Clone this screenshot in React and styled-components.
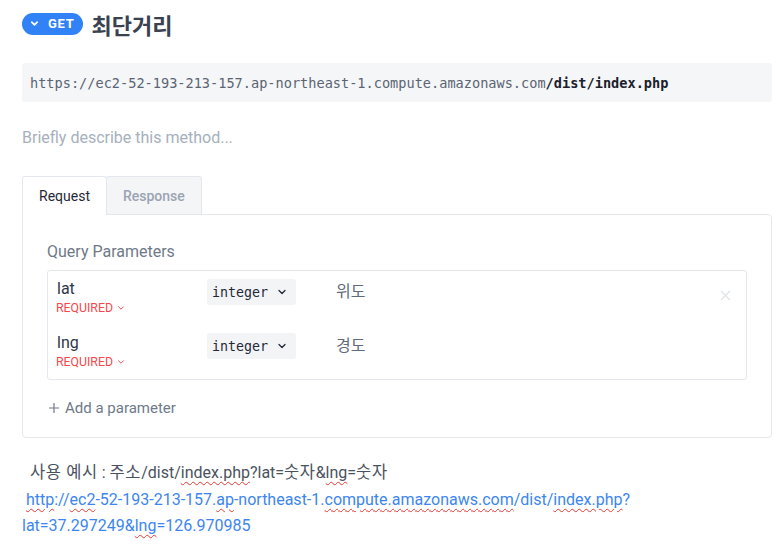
import React from "react";
import styled, { createGlobalStyle } from "styled-components";

const Global = createGlobalStyle`
  html, body { margin: 0; padding: 0; background: #fff; }
  body { font-family: Roboto, "Noto Sans CJK KR", sans-serif; color: #2d3748; }
`;

const Page = styled.div`
  padding: 10px 8px 0 22px;
  width: 750px;
`;

const Header = styled.div`
  display: flex;
  align-items: center;
  gap: 8px;
  height: 27px;
`;

const Badge = styled.div`
  display: flex;
  align-items: center;
  gap: 9px;
  height: 22px;
  padding: 0 9px 0 8px;
  border-radius: 11px;
  background: #3182f6;
  color: #fff;
  font-family: Roboto, sans-serif;
  font-weight: 700;
  font-size: 13px;
  letter-spacing: 0.7px;
`;

const Title = styled.h1`
  margin: 0;
  font-family: "Noto Sans CJK KR", sans-serif;
  font-size: 22px;
  font-weight: 700;
  color: #3a4250;
`;

const UrlBox = styled.div`
  margin-top: 26px;
  height: 39px;
  background: #f5f6f8;
  border-radius: 3px;
  display: flex;
  align-items: center;
  padding-left: 8px;
  font-family: "DejaVu Sans Mono", monospace;
  font-size: 13.6px;
  color: #5a6472;
  white-space: nowrap;
`;

const UrlPath = styled.span`
  color: #1a202c;
  font-weight: 700;
`;

const Describe = styled.div`
  margin-top: 26px;
  font-size: 16px;
  color: #a6b0bd;
  line-height: 20px;
`;

const Tabs = styled.div`
  margin-top: 28px;
  display: flex;
`;

const Tab = styled.div`
  box-sizing: border-box;
  padding: 0 16px;
  display: flex;
  align-items: center;
  font-size: 14px;
  border: 1px solid #e4e8ee;
  border-bottom: none;
  border-radius: 3px 3px 0 0;
  margin-left: ${(p) => (p.$first ? "0" : "-1px")};
  background: ${(p) => (p.$active ? "#fff" : "#f4f5f7")};
  color: ${(p) => (p.$active ? "#1f2937" : "#9aa4b2")};
  font-weight: ${(p) => (p.$active ? 400 : 500)};
  position: relative;
  z-index: ${(p) => (p.$active ? 1 : 0)};
  margin-bottom: ${(p) => (p.$active ? "-1px" : "0")};
  height: ${(p) => (p.$active ? "39px" : "38px")};
`;

const Panel = styled.div`
  border: 1px solid #e4e8ee;
  border-radius: 0 4px 4px 4px;
  padding: 27px 24px 20px 24px;
`;

const SectionTitle = styled.div`
  font-size: 16px;
  color: #6e7a89;
  line-height: 20px;
`;

const ParamBox = styled.div`
  margin-top: 8px;
  border: 1px solid #e4e8ee;
  border-radius: 3px;
`;

const Row = styled.div`
  display: grid;
  grid-template-columns: 150px 129px 1fr 11px;
  padding: 7px 15px 9px 9px;
  height: 38px;
`;

const NameCol = styled.div`
  display: flex;
  flex-direction: column;
`;

const Name = styled.div`
  font-size: 16px;
  color: #2d3748;
  line-height: 22px;
`;

const Required = styled.div`
  font-size: 12.3px;
  color: #f5484d;
  display: flex;
  align-items: center;
  gap: 4px;
  line-height: 16px;
  margin-left: -1px;
`;

const TypeCell = styled.div`
  align-self: start;
  margin-top: 1px;
  width: 89px;
  height: 26px;
  box-sizing: border-box;
  background: #f3f4f6;
  border-radius: 3px;
  display: flex;
  align-items: center;
  padding-left: 5px;
  gap: 9px;
  font-family: "DejaVu Sans Mono", monospace;
  font-size: 13.3px;
  color: #1f2937;
`;

const Desc = styled.div`
  padding-top: 1px;
  font-family: "Noto Sans CJK KR", sans-serif;
  font-size: 16px;
  line-height: 22px;
  color: #5f6b7a;
`;

const Remove = styled.div`
  padding-top: 8px;
`;

const AddParam = styled.div`
  margin-top: 19px;
  display: flex;
  align-items: center;
  gap: 5px;
  padding-left: 1px;
  font-size: 15px;
  color: #6e7a89;
`;

const Example = styled.div`
  margin-top: 22px;
  font-size: 16px;
  line-height: 26.5px;
  color: #4a5260;
  font-family: Roboto, "Noto Sans CJK KR", sans-serif;
`;

const Korean = styled.span`
  font-size: 16.5px;
  letter-spacing: 0.6px;
`;

const Spell = styled.span`
  text-decoration: underline wavy #e53935;
  text-decoration-thickness: 1px;
  text-underline-offset: 3px;
`;

const Link = styled.span`
  color: #3d86f0;
`;

const Chevron = ({ size = 8, color = "#fff", w = 1.8 }) => (
  <svg width={size} height={size} viewBox="0 0 10 10">
    <path d="M2 3.5 L5 6.5 L8 3.5" fill="none" stroke={color} strokeWidth={w} strokeLinecap="round" strokeLinejoin="round" />
  </svg>
);

const params = [
  { name: "lat", desc: "위도", removable: true },
  { name: "lng", desc: "경도", removable: false },
];

export default function App() {
  return (
    <>
      <Global />
      <Page>
        <Header>
          <Badge>
            <Chevron size={9} w={2} />
            GET
          </Badge>
          <Title>최단거리</Title>
        </Header>
        <UrlBox>
          https://ec2-52-193-213-157.ap-northeast-1.compute.amazonaws.com
          <UrlPath>/dist/index.php</UrlPath>
        </UrlBox>
        <Describe>Briefly describe this method...</Describe>
        <Tabs>
          <Tab $active $first>Request</Tab>
          <Tab>Response</Tab>
        </Tabs>
        <Panel>
          <SectionTitle>Query Parameters</SectionTitle>
          <ParamBox>
            {params.map((p) => (
              <Row key={p.name}>
                <NameCol>
                  <Name>{p.name}</Name>
                  <Required>
                    REQUIRED
                    <Chevron size={8} color="#f5484d" w={1.2} />
                  </Required>
                </NameCol>
                <TypeCell>
                  integer
                  <Chevron size={10} color="#1f2937" w={1.3} />
                </TypeCell>
                <Desc>{p.desc}</Desc>
                <Remove>
                  {p.removable && (
                    <svg width="11" height="11" viewBox="0 0 11 11">
                      <path d="M1 1 L10 10 M10 1 L1 10" stroke="#dfe3e8" strokeWidth="1.2" />
                    </svg>
                  )}
                </Remove>
              </Row>
            ))}
          </ParamBox>
          <AddParam>
            <svg width="12" height="12" viewBox="0 0 12 12">
              <path d="M6 1 V11 M1 6 H11" stroke="#6e7a89" strokeWidth="1.2" />
            </svg>
            Add a parameter
          </AddParam>
        </Panel>
        <Example>
          <div>
            &nbsp;&nbsp;<Korean>사용 예시</Korean> : <Korean>주소</Korean>/dist/<Spell>index.php</Spell>?lat=<Korean>숫자</Korean>&amp;<Spell>lng</Spell>=<Korean>숫자</Korean>
          </div>
          <Link>
            &nbsp;<Spell>http</Spell>://<Spell>ec2</Spell>-52-193-213-157.<Spell>ap</Spell>-northeast-1.<Spell>compute.amazonaws.com</Spell>/dist/<Spell>index.php</Spell>?
            <br />
            lat=37.297249&amp;<Spell>lng</Spell>=126.970985
          </Link>
        </Example>
      </Page>
    </>
  );
}
